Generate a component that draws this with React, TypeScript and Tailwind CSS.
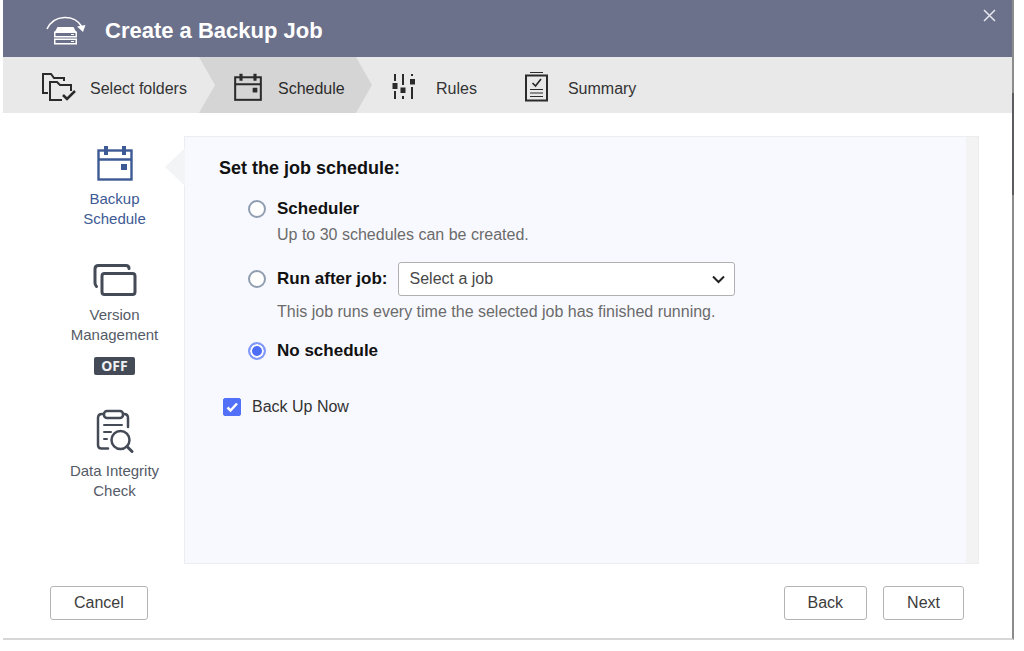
import { useState } from "react";
import type { ReactNode } from "react";

function BackupLogo() {
  return (
    <svg width="40" height="30" viewBox="0 0 40 30" fill="none">
      <path d="M1 13C8 -2 29 -2 36 11" stroke="#fff" strokeWidth="1.6" />
      <path d="M31 10.5L39.5 9L37 16Z" fill="#fff" />
      <path d="M11.5 11H27.500L30.500 16.500H8.500Z" fill="#fff" />
      <rect x="8.75" y="16.25" width="21.5" height="4.5" stroke="#fff" strokeWidth="1.5" />
      <rect x="8.75" y="23.25" width="21.5" height="4.5" stroke="#fff" strokeWidth="1.5" />
      <path d="M25 18.500H28M25 25.500H28" stroke="#fff" strokeWidth="1" />
    </svg>
  );
}

function FoldersIcon() {
  return (
    <svg width="34" height="28" viewBox="0 0 34 28" fill="none" stroke="#2b2b2b" strokeWidth="2">
      <path d="M6 20H1V1H9L12 5H22V8" />
      <path d="M20 27H8V9H15L18 12H29V18" />
      <path d="M21 22L25 26L33 18" strokeWidth="2.5" />
    </svg>
  );
}

function CalendarIcon({ size, stroke }: { size: number; stroke: number }) {
  return (
    <svg width={size} height={size} viewBox="0 0 36 36" fill="none" stroke="currentColor" strokeWidth={stroke}>
      <rect x="1.5" y="5.5" width="33" height="29" />
      <path d="M1 14.5H35" />
      <path d="M9 1V10M27 1V10" strokeWidth="4" />
      <rect x="24" y="19" width="6" height="6" fill="currentColor" stroke="none" />
    </svg>
  );
}

function RulesIcon() {
  return (
    <svg width="24" height="26" viewBox="0 0 24 26" fill="#2b2b2b">
      <path d="M2 0h2v7H2zM.5 9h5v6H.5zM2 17h2v8H2z" />
      <path d="M10 0h2v11h-2zM8.500 13.500h5v5.500H8.500zM10 22h2v3h-2z" />
      <path d="M19 0h2v2h-2zM18 5h5v5.500h-5zM19 13h2v12h-2z" />
    </svg>
  );
}

function SummaryIcon() {
  return (
    <svg width="23" height="30" viewBox="0 0 23 30" fill="none" stroke="#2b2b2b">
      <path d="M5 .5H18" />
      <rect x="1" y="3.5" width="21" height="25" strokeWidth="2" />
      <path d="M7.5 11L10.5 14L16 7" strokeWidth="1.7" />
      <path d="M5 17.5H18M5 21H18M5 24.5H18" strokeWidth="1.2" />
    </svg>
  );
}

function VersionsIcon() {
  return (
    <svg width="44" height="34" viewBox="0 0 44 34" fill="none" stroke="#444b57" strokeWidth="3" strokeLinecap="round">
      <path d="M3.5 23.5Q2 22 2 20V6Q2 2.5 5.500 2.500H33Q36 2.500 36 5.500" />
      <rect x="9" y="10.500" width="33" height="21" rx="2.500" />
    </svg>
  );
}

function IntegrityIcon() {
  return (
    <svg width="38" height="44" viewBox="0 0 38 44" fill="none" stroke="#444b57" strokeWidth="2.500" strokeLinecap="round">
      <path d="M7 5H6Q2 5 2 9V36Q2 39.500 5.500 39.500H12" />
      <path d="M27 5H28Q32 5 32 9V18" />
      <rect x="8" y="2" width="19" height="7" rx="3" />
      <path d="M8 16H26M8 23H15M8 30H11" strokeWidth="2" />
      <circle cx="24.500" cy="31" r="9" />
      <path d="M31 37.500L36 42.500" strokeWidth="3" />
    </svg>
  );
}

type OptionProps = {
  id: string;
  label: string;
  checked: boolean;
  onSelect: (id: string) => void;
};

function RadioOption({ id, label, checked, onSelect }: OptionProps) {
  return (
    <div className="flex items-center gap-[11px]">
      <input
        type="radio"
        name="schedule"
        id={id}
        checked={checked}
        onChange={() => onSelect(id)}
        className="size-[18px] shrink-0 appearance-none rounded-full border-2 border-[#909eb2] bg-white checked:border-[#8299fa] checked:bg-[#4f6ef7] checked:shadow-[inset_0_0_0_2px_#fff]"
      />
      <label htmlFor={id} className="text-[17px] leading-6 font-bold text-[#111]">
        {label}
      </label>
    </div>
  );
}

function SideItem({ icon, children, active }: { icon: ReactNode; children: ReactNode; active?: boolean }) {
  return (
    <button
      type="button"
      className={
        active
          ? "flex flex-col items-center gap-2 text-[15px] leading-5 text-[#3d5a94]"
          : "flex flex-col items-center gap-2 text-[15px] leading-5 text-[#555b66]"
      }
    >
      {icon}
      {children}
    </button>
  );
}

function FooterButton({ children }: { children: string }) {
  return (
    <button type="button" className="h-[34px] rounded-[3px] border border-[#b4b4b4] bg-white px-[23px] text-base text-[#3c3c3c]">
      {children}
    </button>
  );
}

export default function App() {
  const [schedule, setSchedule] = useState("none");
  const [backupNow, setBackupNow] = useState(true);

  return (
    <div className="min-h-screen bg-white pr-[10px] pl-[3px] font-['Liberation_Sans',Arial,sans-serif]">
      <div className="relative border-r-2 border-b-2 border-r-[#8c8c8c] border-b-[#d6d6d6]">
        <header className="flex h-[57px] items-center justify-between bg-[#6c718b] pr-4 pl-[43px]">
          <div className="flex items-center gap-[19px] pt-1">
            <BackupLogo />
            <h1 className="text-[22px] font-bold text-white">Create a Backup Job</h1>
          </div>
          <button type="button" aria-label="Close" className="self-start pt-[9px]">
            <svg width="13" height="13" viewBox="0 0 13 13" stroke="#e6e7ee" strokeWidth="1.500">
              <path d="M1 1L12 12M12 1L1 12" />
            </svg>
          </button>
        </header>

        <nav className="flex h-14 bg-[#e9e9e9] text-base text-[#333]">
          <a href="#folders" className="flex w-[196px] items-center gap-[14px] pt-1 pl-[39px]">
            <FoldersIcon />
            <span className="pt-1">Select folders</span>
          </a>
          <a
            href="#schedule"
            aria-current="step"
            className="flex w-[173px] items-center gap-4 bg-[#d5d5d5] pt-1 pl-[35px] text-[#2b2b2b] [clip-path:polygon(0_0,157px_0,100%_50%,157px_100%,0_100%,16px_50%)]"
          >
            <CalendarIcon size={28} stroke={2.6} />
            <span className="pt-1">Schedule</span>
          </a>
          <a href="#rules" className="flex items-center gap-5 pt-1 pl-5">
            <RulesIcon />
            <span className="pt-1">Rules</span>
          </a>
          <a href="#summary" className="flex items-center gap-5 pt-1 pl-12">
            <SummaryIcon />
            <span className="pt-1">Summary</span>
          </a>
        </nav>

        <main className="flex pt-[23px] pr-[33px]">
          <aside className="flex w-[181px] shrink-0 flex-col items-center gap-[34px] pt-[9px] pl-[42px]">
            <SideItem active icon={<CalendarIcon size={36} stroke={2.4} />}>
              <span>
                Backup
                <br />
                Schedule
              </span>
            </SideItem>
            <SideItem icon={<VersionsIcon />}>
              <span>
                Version
                <br />
                Management
              </span>
              <span className="mt-1 rounded-[2px] bg-[#444b57] px-[7px] font-['Noto_Sans',sans-serif] text-sm leading-[18px] font-bold text-[#eef0f3]">
                OFF
              </span>
            </SideItem>
            <SideItem icon={<IntegrityIcon />}>
              <span>
                Data Integrity
                <br />
                Check
              </span>
            </SideItem>
          </aside>

          <section className="relative flex min-h-[428px] grow border border-[#ededf0] bg-[#f8f9fe]">
            {/* pointer to the active side item */}
            <svg className="absolute top-[11px] -left-5" width="20" height="38" viewBox="0 0 20 38">
              <path d="M20 0L0 19L20 38Z" fill="#f3f4f6" />
            </svg>
            <div className="grow pt-[19px] pl-[34px]">
              <h2 className="text-lg leading-6 font-bold text-[#111]">Set the job schedule:</h2>
              <div className="mt-[17px] ml-[29px]">
                <RadioOption id="scheduler" label="Scheduler" checked={schedule === "scheduler"} onSelect={setSchedule} />
                <p className="mt-1 ml-[29px] text-base leading-5 text-[#6b6b6b]">Up to 30 schedules can be created.</p>

                <div className="mt-[17px] flex items-center gap-[10px]">
                  <RadioOption id="after" label="Run after job:" checked={schedule === "after"} onSelect={setSchedule} />
                  <div className="relative w-[337px]">
                    <select
                      aria-label="Job to run after"
                      className="block h-[34px] w-full appearance-none rounded-[3px] border border-[#b0b0b0] bg-white px-[11px] text-base text-[#484848]"
                    >
                      <option>Select a job</option>
                    </select>
                    <svg
                      className="pointer-events-none absolute top-[13px] right-[10px]"
                      width="13"
                      height="9"
                      viewBox="0 0 13 9"
                      fill="none"
                      stroke="#222"
                      strokeWidth="2"
                    >
                      <path d="M1 1.500L6.500 7L12 1.500" />
                    </svg>
                  </div>
                </div>
                <p className="mt-1.5 ml-[29px] text-base leading-5 text-[#6b6b6b]">
                  This job runs every time the selected job has finished running.
                </p>

                <div className="mt-[17px]">
                  <RadioOption id="none" label="No schedule" checked={schedule === "none"} onSelect={setSchedule} />
                </div>
              </div>

              <div className="mt-8 ml-1 flex items-center gap-[11px]">
                <span className="relative size-[18px]">
                  <input
                    type="checkbox"
                    id="backup-now"
                    checked={backupNow}
                    onChange={(e) => setBackupNow(e.target.checked)}
                    className="block size-[18px] appearance-none rounded-[2px] border border-[#909eb2] bg-white checked:border-[#5271f8] checked:bg-[#5271f8]"
                  />
                  {backupNow && (
                    <svg className="pointer-events-none absolute inset-0" width="18" height="18" viewBox="0 0 18 18" fill="none">
                      <path d="M4.500 9.500L7.500 12.500L14 5.500" stroke="#fff" strokeWidth="2.500" />
                    </svg>
                  )}
                </span>
                <label htmlFor="backup-now" className="text-base leading-6 text-[#333]">
                  Back Up Now
                </label>
              </div>
            </div>
            <div className="w-3 shrink-0 bg-[#f3f3f3]" />
          </section>
        </main>

        <footer className="flex items-center justify-between pt-[22px] pr-12 pb-[18px] pl-[47px]">
          <FooterButton>Cancel</FooterButton>
          <div className="flex gap-4">
            <FooterButton>Back</FooterButton>
            <FooterButton>Next</FooterButton>
          </div>
        </footer>

        {/* dark stretch of the window edge */}
        <div className="absolute top-[93px] -right-0.5 h-[102px] w-0.5 bg-[#5c5c60]" />
      </div>
    </div>
  );
}
